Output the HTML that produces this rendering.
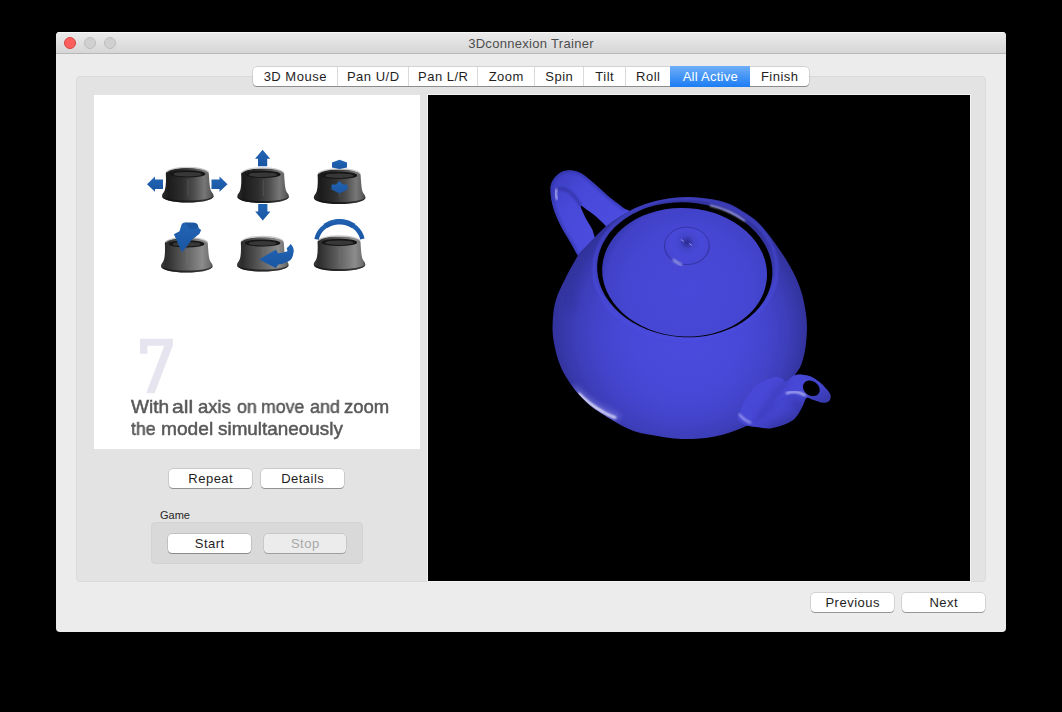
<!DOCTYPE html>
<html><head><meta charset="utf-8">
<style>
html,body{margin:0;padding:0;background:#000;width:1062px;height:712px;overflow:hidden;font-family:"Liberation Sans",sans-serif;}
.abs{position:absolute;}
#win{position:absolute;left:56px;top:32px;width:950px;height:600px;background:#ececec;border-radius:4px;overflow:hidden;}
#title{position:absolute;left:0;top:0;width:950px;height:21px;background:linear-gradient(#ebebeb,#d6d6d6);border-bottom:1px solid #b8b8b8;box-shadow:inset 0 1px 0 #f6f6f6;}
#title .t{position:absolute;left:0;width:950px;top:4px;text-align:center;font-size:13px;color:#4d4d4d;letter-spacing:0.3px;}
.light{position:absolute;width:12px;height:12px;box-sizing:border-box;border-radius:50%;top:5px;}
#group{position:absolute;left:20px;top:44px;width:908px;height:504px;background:#e3e3e3;border:1px solid #dadada;border-radius:4px;}
#white{position:absolute;left:38px;top:63px;width:326px;height:354px;background:#fff;}
#black{position:absolute;left:371px;top:62px;width:542px;height:486px;background:#000;border:1px solid #f2f2f2;}
.btn{position:absolute;height:19px;background:#fff;border-radius:4px;box-shadow:0 0 0 0.5px rgba(0,0,0,0.22),0 1px 0.5px rgba(0,0,0,0.28);font-size:13px;color:#1e1e1e;text-align:center;line-height:19px;letter-spacing:0.5px;text-indent:0.5px;}
#tabs{position:absolute;left:197px;top:35px;width:556px;height:19px;background:#fff;border-radius:4px;box-shadow:0 0 0 0.5px rgba(0,0,0,0.22),0 1px 0.5px rgba(0,0,0,0.3);}
.tab{position:absolute;top:0;height:19px;line-height:20px;font-size:13px;color:#1e1e1e;text-align:center;border-left:1px solid #dadada;box-sizing:border-box;letter-spacing:0.5px;text-indent:0.5px;}
.para span{position:absolute;will-change:transform;font-size:18.5px;line-height:22px;color:#585858;-webkit-text-stroke:0.5px #585858;white-space:nowrap;transform-origin:0 0;}
</style></head><body>
<div id="win">
  <div id="title">
    <div class="light" style="left:8px;background:#fc605c;border:0.5px solid #d9443f;"></div>
    <div class="light" style="left:28px;background:#d0d0d0;border:0.5px solid #bdbdbd;"></div>
    <div class="light" style="left:48px;background:#d0d0d0;border:0.5px solid #bdbdbd;"></div>
    <div class="t">3Dconnexion Trainer</div>
  </div>
  <div id="group"></div>
  <div id="tabs">
    <div class="tab" style="left:0;width:84px;border-left:0;border-radius:4px 0 0 4px">3D Mouse</div>
    <div class="tab" style="left:84px;width:71px">Pan U/D</div>
    <div class="tab" style="left:155px;width:69px">Pan L/R</div>
    <div class="tab" style="left:224px;width:57px">Zoom</div>
    <div class="tab" style="left:281px;width:49px">Spin</div>
    <div class="tab" style="left:330px;width:42px">Tilt</div>
    <div class="tab" style="left:372px;width:45px">Roll</div>
    <div class="tab" style="left:417px;top:-1px;height:21px;line-height:22px;width:80px;border-left:0;background:linear-gradient(#6eaef7,#1b7df4);color:#fff;letter-spacing:0.25px">All Active</div>
    <div class="tab" style="left:497px;width:59px;border-left:0">Finish</div>
  </div>
  <div id="white">
    <svg class="abs" style="left:-94px;top:-95px" width="420" height="450"><path d="M140,338.7 L172.9,338.7 L172.9,345.3 L154.6,393.2 L146.2,393.2 L164.3,345.7 L147.4,345.7 L147.4,353.8 L140,353.8 Z" fill="#e6e4ee"/></svg>
    <div class="para"><span style="left:36.7px;top:301px;transform:scaleX(1.028)">With</span><span style="left:78.1px;top:301px;transform:scaleX(1.141)">all</span><span style="left:103.7px;top:301px;transform:scaleX(0.994)">axis</span><span style="left:143.0px;top:301px;transform:scaleX(0.965)">on</span><span style="left:167.3px;top:301px;transform:scaleX(0.955)">move</span><span style="left:215.5px;top:301px;transform:scaleX(0.972)">and</span><span style="left:250.0px;top:301px;transform:scaleX(1.000)">zoom</span><span style="left:37.2px;top:323px;transform:scaleX(0.952)">the</span><span style="left:67.3px;top:323px;transform:scaleX(1.035)">model</span><span style="left:124.2px;top:323px;transform:scaleX(1.020)">simultaneously</span></div>
  </div>
  <div id="black"></div>
  <div class="btn" style="left:113px;top:437px;width:83px">Repeat</div>
  <div class="btn" style="left:205px;top:437px;width:83px">Details</div>
  <div class="abs" style="left:104px;top:477px;font-size:11px;color:#262626">Game</div>
  <div class="abs" style="left:95px;top:490px;width:212px;height:42px;background:#d9d9d9;border-radius:4px;border:1px solid #d3d3d3;box-sizing:border-box"></div>
  <div class="btn" style="left:112px;top:502px;width:83px">Start</div>
  <div class="btn" style="left:208px;top:502px;width:82px;background:#ececec;color:#a8a8a8;box-shadow:0 0 0 0.5px rgba(0,0,0,0.16),0 1px 0.5px rgba(0,0,0,0.2)">Stop</div>
  <div class="btn" style="left:755px;top:561px;width:83px">Previous</div>
  <div class="btn" style="left:846px;top:561px;width:83px">Next</div>
</div>
<!--CAPS--><svg class="abs" style="left:0;top:0" width="1062" height="712" viewBox="0 0 1062 712">
<defs>
<linearGradient id="gCapD" x1="0" y1="0" x2="1" y2="0">
<stop offset="0" stop-color="#2c2c2c"/><stop offset="0.12" stop-color="#1b1b1b"/><stop offset="0.4" stop-color="#2e2e2e"/><stop offset="0.62" stop-color="#4e4e4e"/><stop offset="0.82" stop-color="#777"/><stop offset="0.95" stop-color="#5a5a5a"/><stop offset="1" stop-color="#383838"/></linearGradient>
<linearGradient id="gCapL" x1="0" y1="0" x2="1" y2="0">
<stop offset="0" stop-color="#3a3a3a"/><stop offset="0.1" stop-color="#2c2c2c"/><stop offset="0.3" stop-color="#484848"/><stop offset="0.55" stop-color="#6a6a6a"/><stop offset="0.8" stop-color="#8c8c8c"/><stop offset="0.95" stop-color="#6e6e6e"/><stop offset="1" stop-color="#484848"/></linearGradient>
<linearGradient id="gArrow" x1="0" y1="0" x2="0" y2="1">
<stop offset="0" stop-color="#2264b4"/><stop offset="1" stop-color="#1a56a2"/></linearGradient>
</defs>
<g transform="translate(162 167.5)">
<path d="M3.8,6 C3.8,2.5 13,0.6 25.5,0.6 C38,0.6 46.8,2.5 46.8,6 C47.2,12 47.5,18 48.5,22 C49.5,25 51.6,26 51.6,28.5 C51.6,32.5 40,35 25.5,35 C11,35 0,32.5 0,28.5 C0,26 2.2,25 3,22 C4,18 4.2,12 3.8,6 Z" fill="url(#gCapD)"/>
<path d="M0,28.5 C0,32.5 11,35 25.5,35 C40,35 51.6,32.5 51.6,28.5 C50,31 40,33 25.5,33 C11,33 2,31 0,28.5 Z" fill="#111" opacity="0.7"/>
<path d="M4.5,4.5 C8,1.2 16,-0.2 25.5,-0.2 C35,-0.2 43,1.2 46.5,4.5" fill="none" stroke="#c4c4c4" stroke-width="1.3" opacity="0.85"/>
<ellipse cx="25.6" cy="6.4" rx="17.8" ry="3.6" fill="#161616"/>
<ellipse cx="25.6" cy="6.7" rx="14" ry="2.3" fill="#383838"/>
<line x1="26" y1="12" x2="26" y2="28" stroke="#8a8a8a" stroke-width="0.5" opacity="0.5"/>
</g>
<g transform="translate(237.3 168)">
<path d="M3.8,6 C3.8,2.5 13,0.6 25.5,0.6 C38,0.6 46.8,2.5 46.8,6 C47.2,12 47.5,18 48.5,22 C49.5,25 51.6,26 51.6,28.5 C51.6,32.5 40,35 25.5,35 C11,35 0,32.5 0,28.5 C0,26 2.2,25 3,22 C4,18 4.2,12 3.8,6 Z" fill="url(#gCapD)"/>
<path d="M0,28.5 C0,32.5 11,35 25.5,35 C40,35 51.6,32.5 51.6,28.5 C50,31 40,33 25.5,33 C11,33 2,31 0,28.5 Z" fill="#111" opacity="0.7"/>
<path d="M4.5,4.5 C8,1.2 16,-0.2 25.5,-0.2 C35,-0.2 43,1.2 46.5,4.5" fill="none" stroke="#c4c4c4" stroke-width="1.3" opacity="0.85"/>
<ellipse cx="25.6" cy="6.4" rx="17.8" ry="3.6" fill="#161616"/>
<ellipse cx="25.6" cy="6.7" rx="14" ry="2.3" fill="#383838"/>
<line x1="26" y1="12" x2="26" y2="28" stroke="#8a8a8a" stroke-width="0.5" opacity="0.5"/>
</g>
<g transform="translate(313.8 169)">
<path d="M3.8,6 C3.8,2.5 13,0.6 25.5,0.6 C38,0.6 46.8,2.5 46.8,6 C47.2,12 47.5,18 48.5,22 C49.5,25 51.6,26 51.6,28.5 C51.6,32.5 40,35 25.5,35 C11,35 0,32.5 0,28.5 C0,26 2.2,25 3,22 C4,18 4.2,12 3.8,6 Z" fill="url(#gCapD)"/>
<path d="M0,28.5 C0,32.5 11,35 25.5,35 C40,35 51.6,32.5 51.6,28.5 C50,31 40,33 25.5,33 C11,33 2,31 0,28.5 Z" fill="#111" opacity="0.7"/>
<path d="M4.5,4.5 C8,1.2 16,-0.2 25.5,-0.2 C35,-0.2 43,1.2 46.5,4.5" fill="none" stroke="#c4c4c4" stroke-width="1.3" opacity="0.85"/>
<ellipse cx="25.6" cy="6.4" rx="17.8" ry="3.6" fill="#161616"/>
<ellipse cx="25.6" cy="6.7" rx="14" ry="2.3" fill="#383838"/>
<line x1="26" y1="12" x2="26" y2="28" stroke="#8a8a8a" stroke-width="0.5" opacity="0.5"/>
</g>
<g transform="translate(161 237.5)">
<path d="M3.8,6 C3.8,2.5 13,0.6 25.5,0.6 C38,0.6 46.8,2.5 46.8,6 C47.2,12 47.5,18 48.5,22 C49.5,25 51.6,26 51.6,28.5 C51.6,32.5 40,35 25.5,35 C11,35 0,32.5 0,28.5 C0,26 2.2,25 3,22 C4,18 4.2,12 3.8,6 Z" fill="url(#gCapL)"/>
<path d="M0,28.5 C0,32.5 11,35 25.5,35 C40,35 51.6,32.5 51.6,28.5 C50,31 40,33 25.5,33 C11,33 2,31 0,28.5 Z" fill="#111" opacity="0.7"/>
<path d="M4.5,4.5 C8,1.2 16,-0.2 25.5,-0.2 C35,-0.2 43,1.2 46.5,4.5" fill="none" stroke="#c4c4c4" stroke-width="1.3" opacity="0.85"/>
<ellipse cx="25.6" cy="6.4" rx="17.8" ry="3.6" fill="#161616"/>
<ellipse cx="25.6" cy="6.7" rx="14" ry="2.3" fill="#383838"/>
<line x1="26" y1="12" x2="26" y2="28" stroke="#8a8a8a" stroke-width="0.5" opacity="0.5"/>
</g>
<g transform="translate(237 236.6)">
<path d="M3.8,6 C3.8,2.5 13,0.6 25.5,0.6 C38,0.6 46.8,2.5 46.8,6 C47.2,12 47.5,18 48.5,22 C49.5,25 51.6,26 51.6,28.5 C51.6,32.5 40,35 25.5,35 C11,35 0,32.5 0,28.5 C0,26 2.2,25 3,22 C4,18 4.2,12 3.8,6 Z" fill="url(#gCapL)"/>
<path d="M0,28.5 C0,32.5 11,35 25.5,35 C40,35 51.6,32.5 51.6,28.5 C50,31 40,33 25.5,33 C11,33 2,31 0,28.5 Z" fill="#111" opacity="0.7"/>
<path d="M4.5,4.5 C8,1.2 16,-0.2 25.5,-0.2 C35,-0.2 43,1.2 46.5,4.5" fill="none" stroke="#c4c4c4" stroke-width="1.3" opacity="0.85"/>
<ellipse cx="25.6" cy="6.4" rx="17.8" ry="3.6" fill="#161616"/>
<ellipse cx="25.6" cy="6.7" rx="14" ry="2.3" fill="#383838"/>
<line x1="26" y1="12" x2="26" y2="28" stroke="#8a8a8a" stroke-width="0.5" opacity="0.5"/>
</g>
<g transform="translate(313.7 236)">
<path d="M3.8,6 C3.8,2.5 13,0.6 25.5,0.6 C38,0.6 46.8,2.5 46.8,6 C47.2,12 47.5,18 48.5,22 C49.5,25 51.6,26 51.6,28.5 C51.6,32.5 40,35 25.5,35 C11,35 0,32.5 0,28.5 C0,26 2.2,25 3,22 C4,18 4.2,12 3.8,6 Z" fill="url(#gCapL)"/>
<path d="M0,28.5 C0,32.5 11,35 25.5,35 C40,35 51.6,32.5 51.6,28.5 C50,31 40,33 25.5,33 C11,33 2,31 0,28.5 Z" fill="#111" opacity="0.7"/>
<path d="M4.5,4.5 C8,1.2 16,-0.2 25.5,-0.2 C35,-0.2 43,1.2 46.5,4.5" fill="none" stroke="#c4c4c4" stroke-width="1.3" opacity="0.85"/>
<ellipse cx="25.6" cy="6.4" rx="17.8" ry="3.6" fill="#161616"/>
<ellipse cx="25.6" cy="6.7" rx="14" ry="2.3" fill="#383838"/>
<line x1="26" y1="12" x2="26" y2="28" stroke="#8a8a8a" stroke-width="0.5" opacity="0.5"/>
</g>
<path d="M147.0,184.2 L155.0,176.6 L155.0,179.5 L163.0,179.5 L163.0,188.9 L155.0,188.9 L155.0,191.8Z" fill="url(#gArrow)"/>
<path d="M227.5,184.2 L219.5,176.6 L219.5,179.5 L211.5,179.5 L211.5,188.9 L219.5,188.9 L219.5,191.8Z" fill="url(#gArrow)"/>
<path d="M262.6,149.8 L255.0,158.8 L258.0,158.8 L258.0,166.3 L267.2,166.3 L267.2,158.8 L270.2,158.8Z" fill="url(#gArrow)"/>
<path d="M262.8,220.5 L255.2,211.5 L258.2,211.5 L258.2,204.0 L267.4,204.0 L267.4,211.5 L270.4,211.5Z" fill="url(#gArrow)"/>
<path d="M332,162.5 L339.5,159.8 L347,162.5 L347,167.5 L339.5,169 L332,167.5 Z" fill="url(#gArrow)"/>
<path d="M331.5,184.5 L336,184.5 L339.5,181 L343,184.5 L347.5,184.5 L347.5,189.5 L339.5,193.5 L331.5,189.5 Z" fill="url(#gArrow)"/>
<path d="M182,252.6 L173.9,234.3 L179.5,231.2 L181.6,224.6 C182.2,223.2 183.5,222.6 185,222.5 L194.5,222.8 C196.5,223.2 197.6,224.3 197.9,225.6 L198.6,228.1 L201.1,230.1 L199.5,233.7 L191.6,239.9 Z" fill="url(#gArrow)"/>
<path d="M185,222.5 L194.5,222.8 C196.5,223.2 197.6,224.3 197.9,225.6 L198.6,228.1 L190,229 Z" fill="#174c8e" opacity="0.5"/>
<path d="M258.9,259.4 L275.9,249.7 L278.2,253.6 C281,253 284,252.5 287.5,251.3 L286.7,248.2 L289,245.9 L290.6,243.9 C293,246 294,249 293.7,251.5 C293.2,255 292.5,258 290.5,260 C287,262.5 283,264 278.2,264.4 L275.9,267.9 Z" fill="url(#gArrow)"/>
<path d="M314.39,238.92 L314.63,237.81 L314.93,236.72 L315.28,235.64 L315.69,234.58 L316.16,233.54 L316.68,232.51 L317.25,231.52 L317.87,230.55 L318.55,229.61 L319.27,228.69 L320.04,227.82 L320.85,226.97 L321.71,226.17 L322.60,225.40 L323.54,224.67 L324.51,223.99 L327.16,227.79 L326.36,228.34 L325.58,228.92 L324.85,229.53 L324.14,230.18 L323.47,230.85 L322.84,231.56 L322.25,232.28 L321.69,233.04 L321.18,233.81 L320.71,234.61 L320.28,235.43 L319.89,236.26 L319.56,237.11 L319.26,237.98 L319.02,238.85 L318.82,239.74Z" fill="url(#gArrow)"/>
<path d="M323.49,224.09 L325.24,222.93 L327.09,221.91 L329.03,221.03 L331.04,220.31 L333.10,219.74 L335.21,219.33 L337.35,219.08 L339.50,219.00 L341.65,219.08 L343.79,219.33 L345.90,219.74 L347.96,220.31 L349.97,221.03 L351.91,221.91 L353.76,222.93 L355.51,224.09 L352.18,228.34 L350.79,227.45 L349.33,226.65 L347.80,225.98 L346.21,225.41 L344.57,224.97 L342.90,224.66 L341.21,224.46 L339.50,224.40 L337.79,224.46 L336.10,224.66 L334.43,224.97 L332.79,225.41 L331.20,225.98 L329.67,226.65 L328.21,227.45 L326.82,228.34Z" fill="url(#gArrow)"/>
<path d="M354.49,223.99 L355.44,224.66 L356.36,225.37 L357.23,226.11 L358.07,226.90 L358.87,227.72 L359.63,228.57 L360.34,229.46 L361.01,230.37 L361.63,231.32 L362.20,232.29 L362.72,233.28 L363.18,234.29 L363.60,235.32 L363.97,236.37 L364.28,237.44 L364.53,238.52 L360.11,239.41 L359.90,238.55 L359.65,237.70 L359.35,236.86 L359.01,236.03 L358.62,235.22 L358.19,234.43 L357.72,233.65 L357.21,232.90 L356.66,232.17 L356.08,231.46 L355.45,230.77 L354.80,230.12 L354.10,229.49 L353.38,228.89 L352.63,228.33 L351.84,227.79Z" fill="url(#gArrow)"/>
</svg><!--/CAPS-->
<!--TEAPOT--><svg class="abs" style="left:0;top:0" width="1062" height="712" viewBox="0 0 1062 712">
<defs>
<radialGradient id="gBody" cx="680" cy="330" r="132" fx="690" fy="340" gradientUnits="userSpaceOnUse">
<stop offset="0" stop-color="#4a4bdc"/><stop offset="0.4" stop-color="#4849d8"/><stop offset="0.62" stop-color="#4445ce"/><stop offset="0.8" stop-color="#3d3eba"/><stop offset="0.92" stop-color="#3536a4"/><stop offset="1" stop-color="#2f3096"/></radialGradient>
<linearGradient id="gHandle" x1="550" y1="180" x2="620" y2="240" gradientUnits="userSpaceOnUse">
<stop offset="0" stop-color="#3d3ec2"/><stop offset="0.35" stop-color="#4849d8"/><stop offset="1" stop-color="#4d4ee2"/></linearGradient>
<radialGradient id="gLid" cx="690" cy="290" r="90" gradientUnits="userSpaceOnUse">
<stop offset="0" stop-color="#4849d8"/><stop offset="0.7" stop-color="#4546d2"/><stop offset="0.92" stop-color="#4142c8"/><stop offset="1" stop-color="#3a3bb8"/></radialGradient>
<linearGradient id="gSpout" x1="760" y1="380" x2="790" y2="430" gradientUnits="userSpaceOnUse">
<stop offset="0" stop-color="#4647d4"/><stop offset="0.6" stop-color="#4445cf"/><stop offset="1" stop-color="#34359f"/></linearGradient>
<radialGradient id="gKnob" cx="687" cy="242.5" r="24" gradientUnits="userSpaceOnUse">
<stop offset="0" stop-color="#2a2b90"/><stop offset="0.12" stop-color="#3536a8"/><stop offset="0.3" stop-color="#4445cc"/><stop offset="0.6" stop-color="#4849d8"/><stop offset="0.9" stop-color="#4647d3"/><stop offset="1" stop-color="#3a3bb5"/></radialGradient>
<filter id="blur1" x="-20%" y="-20%" width="140%" height="140%"><feGaussianBlur stdDeviation="1"/></filter>
<filter id="blur3" x="-20%" y="-20%" width="140%" height="140%"><feGaussianBlur stdDeviation="3"/></filter>
<clipPath id="cBody"><path d="M690.0,197.0 C699.9,197.3 713.5,199.0 722.5,201.5 C731.5,204.0 737.4,207.8 744.0,212.0 C750.6,216.2 755.1,218.7 762.0,226.5 C768.9,234.3 779.3,248.6 785.6,258.8 C791.9,269.0 796.4,277.6 799.9,287.5 C803.4,297.4 805.5,308.6 806.5,318.0 C807.5,327.4 806.8,335.9 806.0,343.6 C805.2,351.3 803.5,358.5 801.5,364.0 C799.5,369.5 797.6,370.6 794.0,376.6 C790.4,382.6 785.3,393.3 780.0,400.0 C774.7,406.7 768.2,412.4 762.0,417.0 C755.8,421.6 750.8,424.3 743.0,427.5 C735.2,430.7 725.2,434.5 715.0,436.4 C704.8,438.3 692.5,439.2 682.0,439.0 C671.5,438.8 660.5,436.6 651.7,435.0 C642.9,433.4 637.8,432.8 629.4,429.2 C621.0,425.6 608.9,418.0 601.6,413.4 C594.3,408.8 590.8,406.1 585.8,401.4 C580.8,396.7 575.6,391.1 571.3,385.0 C567.0,378.9 563.0,372.5 560.0,365.0 C557.0,357.5 554.7,347.5 553.5,340.0 C552.3,332.5 552.4,326.7 552.8,320.0 C553.2,313.3 553.9,306.7 555.9,300.0 C557.9,293.3 560.9,287.4 564.6,280.0 C568.3,272.6 574.3,261.5 577.9,255.8 C581.5,250.1 583.3,249.3 586.3,246.0 C589.3,242.7 592.8,239.4 596.1,236.1 C599.4,232.8 602.0,229.6 606.0,226.3 C610.0,223.0 614.3,219.9 620.0,216.5 C625.7,213.1 632.8,208.8 640.0,206.0 C647.2,203.2 654.7,201.0 663.0,199.5 C671.3,198.0 680.1,196.7 690.0,197.0 Z"/></clipPath>
<clipPath id="cSpout"><path d="M738.0,416.0 C739.0,412.3 742.3,404.4 745.5,399.2 C748.7,394.0 752.3,388.3 757.0,384.7 C761.7,381.1 769.4,378.4 773.5,377.4 C777.6,376.4 779.7,377.8 781.8,378.5 C783.9,379.2 783.9,382.1 786.0,381.6 C788.1,381.1 791.5,376.5 794.2,375.4 C797.0,374.3 799.7,374.6 802.5,374.8 C805.3,375.0 808.0,375.3 810.8,376.4 C813.5,377.5 816.4,379.5 819.0,381.6 C821.6,383.7 824.4,386.6 826.3,388.8 C828.2,391.0 830.0,393.0 830.5,395.0 C831.0,397.0 830.6,399.4 829.4,400.7 C828.2,402.0 826.0,403.0 823.2,402.8 C820.5,402.6 815.7,400.5 812.9,399.7 C810.1,398.9 808.3,396.9 806.6,398.0 C804.9,399.1 804.2,403.3 802.5,406.4 C800.8,409.5 798.7,414.0 796.3,416.8 C793.9,419.6 792.1,421.1 788.0,423.0 C783.9,424.9 776.7,427.5 771.4,428.2 C766.1,428.9 760.3,427.6 756.0,427.1 C751.7,426.6 748.2,425.9 745.5,425.0 C742.8,424.1 740.8,423.0 739.5,421.5 C738.2,420.0 737.0,419.7 738.0,416.0 Z"/></clipPath>
<clipPath id="cHandle"><path d="M625.0,209.0 C622.2,206.8 613.2,200.2 608.0,195.9 C602.8,191.6 598.4,187.1 594.0,183.3 C589.6,179.6 585.6,175.6 581.5,173.4 C577.4,171.2 573.4,170.3 569.6,170.3 C565.9,170.3 561.9,171.5 559.0,173.4 C556.1,175.3 553.4,178.8 552.0,181.8 C550.6,184.8 550.3,186.8 550.5,191.2 C550.7,195.6 551.5,202.2 553.3,208.0 C555.0,213.8 558.1,220.4 561.0,226.3 C563.9,232.2 568.1,238.3 570.9,243.2 C573.7,248.1 576.0,252.5 577.9,255.8 C579.8,259.1 581.3,261.8 582.0,263.0 L640,240 L640,215 Z"/></clipPath>
</defs>
<g>
<path d="M625.0,209.0 C622.2,206.8 613.2,200.2 608.0,195.9 C602.8,191.6 598.4,187.1 594.0,183.3 C589.6,179.6 585.6,175.6 581.5,173.4 C577.4,171.2 573.4,170.3 569.6,170.3 C565.9,170.3 561.9,171.5 559.0,173.4 C556.1,175.3 553.4,178.8 552.0,181.8 C550.6,184.8 550.3,186.8 550.5,191.2 C550.7,195.6 551.5,202.2 553.3,208.0 C555.0,213.8 558.1,220.4 561.0,226.3 C563.9,232.2 568.1,238.3 570.9,243.2 C573.7,248.1 576.0,252.5 577.9,255.8 C579.8,259.1 581.3,261.8 582.0,263.0 L640,240 L640,215 Z" fill="url(#gHandle)"/>
<g clip-path="url(#cHandle)">
<path d="M625.0,209.0 C622.2,206.8 613.2,200.2 608.0,195.9 C602.8,191.6 598.4,187.1 594.0,183.3 C589.6,179.6 585.6,175.6 581.5,173.4 C577.4,171.2 573.4,170.3 569.6,170.3 C565.9,170.3 561.9,171.5 559.0,173.4 C556.1,175.3 553.4,178.8 552.0,181.8 C550.6,184.8 550.3,186.8 550.5,191.2 C550.7,195.6 551.5,202.2 553.3,208.0 C555.0,213.8 558.1,220.4 561.0,226.3 C563.9,232.2 568.1,238.3 570.9,243.2 C573.7,248.1 576.0,252.5 577.9,255.8 C579.8,259.1 581.3,261.8 582.0,263.0" fill="none" stroke="#2c2d96" stroke-width="5" opacity="0.45" filter="url(#blur1)"/>
<path d="M556,190 C562,186 572,190 581,206" fill="none" stroke="#2a2b90" stroke-width="3" opacity="0.6" filter="url(#blur1)"/>
</g>
<path d="M580.7,206.0 C581.0,204.5 585.5,208.8 588.0,210.5 C590.5,212.2 593.0,213.9 596.0,216.5 C599.0,219.1 603.3,223.1 606.0,226.3 C608.7,229.6 613.3,233.4 612.0,236.0 C610.7,238.6 601.3,243.2 598.0,242.0 C594.7,240.8 594.0,232.8 592.0,229.0 C590.0,225.2 588.2,223.1 586.3,219.3 C584.4,215.5 580.4,207.5 580.7,206.0 Z" fill="#000"/>
<path d="M556.5,189.5 C555,192 555.5,196 557,199" fill="none" stroke="#e8e8ff" stroke-width="1.6" stroke-linecap="round" filter="url(#blur1)"/>
</g>
<path d="M690.0,197.0 C699.9,197.3 713.5,199.0 722.5,201.5 C731.5,204.0 737.4,207.8 744.0,212.0 C750.6,216.2 755.1,218.7 762.0,226.5 C768.9,234.3 779.3,248.6 785.6,258.8 C791.9,269.0 796.4,277.6 799.9,287.5 C803.4,297.4 805.5,308.6 806.5,318.0 C807.5,327.4 806.8,335.9 806.0,343.6 C805.2,351.3 803.5,358.5 801.5,364.0 C799.5,369.5 797.6,370.6 794.0,376.6 C790.4,382.6 785.3,393.3 780.0,400.0 C774.7,406.7 768.2,412.4 762.0,417.0 C755.8,421.6 750.8,424.3 743.0,427.5 C735.2,430.7 725.2,434.5 715.0,436.4 C704.8,438.3 692.5,439.2 682.0,439.0 C671.5,438.8 660.5,436.6 651.7,435.0 C642.9,433.4 637.8,432.8 629.4,429.2 C621.0,425.6 608.9,418.0 601.6,413.4 C594.3,408.8 590.8,406.1 585.8,401.4 C580.8,396.7 575.6,391.1 571.3,385.0 C567.0,378.9 563.0,372.5 560.0,365.0 C557.0,357.5 554.7,347.5 553.5,340.0 C552.3,332.5 552.4,326.7 552.8,320.0 C553.2,313.3 553.9,306.7 555.9,300.0 C557.9,293.3 560.9,287.4 564.6,280.0 C568.3,272.6 574.3,261.5 577.9,255.8 C581.5,250.1 583.3,249.3 586.3,246.0 C589.3,242.7 592.8,239.4 596.1,236.1 C599.4,232.8 602.0,229.6 606.0,226.3 C610.0,223.0 614.3,219.9 620.0,216.5 C625.7,213.1 632.8,208.8 640.0,206.0 C647.2,203.2 654.7,201.0 663.0,199.5 C671.3,198.0 680.1,196.7 690.0,197.0 Z" fill="url(#gBody)"/>
<g clip-path="url(#cBody)">
<path d="M572,310 C568,280 580,252 604,228" fill="none" stroke="#2f3098" stroke-width="12" opacity="0.3" filter="url(#blur3)"/>
<ellipse cx="685.5" cy="269" rx="91.5" ry="70.5" fill="none" stroke="#4d4ee2" stroke-width="3" opacity="0.6" filter="url(#blur1)"/>
</g>
<ellipse cx="684.8" cy="269.8" rx="87.7" ry="67.4" transform="rotate(4 684.8 269.8)" fill="#000"/>
<ellipse cx="684.6" cy="272.3" rx="82.5" ry="64.2" transform="rotate(4 684.6 272.3)" fill="url(#gLid)"/>
<path d="M710,205.5 C722,208 734,213 745,221" fill="none" stroke="#dcdcff" stroke-width="1.3" opacity="0.85" filter="url(#blur1)"/>
<ellipse cx="686.9" cy="245.9" rx="22.8" ry="19.1" fill="url(#gKnob)"/>
<ellipse cx="686.9" cy="245.9" rx="22.4" ry="18.7" fill="none" stroke="#2e2f98" stroke-width="1" opacity="0.8"/>
<path d="M681,239.5 L684,241.5 M689,243.5 L692,245.5" stroke="#c8c8ff" stroke-width="0.7" opacity="0.8"/>
<path d="M673,259.5 C676,262.5 679,264 682,264.8" fill="none" stroke="#e8e8ff" stroke-width="1.2" filter="url(#blur1)"/>
<g clip-path="url(#cBody)">
<path d="M573,388 C582,397 592,405 603,411 C608,414 613,416 619,418" fill="none" stroke="#9090f4" stroke-width="7" opacity="0.55" filter="url(#blur3)"/>
<path d="M579,394 C586,401 594,407 603,412 C607,414.5 611,416 615,417.5" fill="none" stroke="#f4f4ff" stroke-width="2.6" stroke-linecap="round" opacity="0.9" filter="url(#blur1)"/>
</g>
<path d="M738.0,416.0 C739.0,412.3 742.3,404.4 745.5,399.2 C748.7,394.0 752.3,388.3 757.0,384.7 C761.7,381.1 769.4,378.4 773.5,377.4 C777.6,376.4 779.7,377.8 781.8,378.5 C783.9,379.2 783.9,382.1 786.0,381.6 C788.1,381.1 791.5,376.5 794.2,375.4 C797.0,374.3 799.7,374.6 802.5,374.8 C805.3,375.0 808.0,375.3 810.8,376.4 C813.5,377.5 816.4,379.5 819.0,381.6 C821.6,383.7 824.4,386.6 826.3,388.8 C828.2,391.0 830.0,393.0 830.5,395.0 C831.0,397.0 830.6,399.4 829.4,400.7 C828.2,402.0 826.0,403.0 823.2,402.8 C820.5,402.6 815.7,400.5 812.9,399.7 C810.1,398.9 808.3,396.9 806.6,398.0 C804.9,399.1 804.2,403.3 802.5,406.4 C800.8,409.5 798.7,414.0 796.3,416.8 C793.9,419.6 792.1,421.1 788.0,423.0 C783.9,424.9 776.7,427.5 771.4,428.2 C766.1,428.9 760.3,427.6 756.0,427.1 C751.7,426.6 748.2,425.9 745.5,425.0 C742.8,424.1 740.8,423.0 739.5,421.5 C738.2,420.0 737.0,419.7 738.0,416.0 Z" fill="url(#gSpout)"/>
<g clip-path="url(#cSpout)">
<path d="M745.5,399.2 C748.0,393.3 752.3,388.3 757.0,384.7 C761.7,381.1 769.4,378.4 773.5,377.4 C777.6,376.4 779.7,377.8 781.8,378.5 C783.9,379.2 783.9,382.1 786.0,381.6 C788.1,381.1 791.5,376.5 794.2,375.4 C797.0,374.3 800.5,374.0 802.5,374.8 C804.5,375.6 805.8,377.1 806.0,380.0 C806.2,382.9 805.8,389.8 804.0,392.0 C802.2,394.2 798.2,392.3 795.0,393.0 C791.8,393.7 788.8,394.0 785.0,396.0 C781.2,398.0 777.0,401.3 772.0,405.0 C767.0,408.7 760.0,415.5 755.0,418.0 C750.0,420.5 743.6,423.1 742.0,420.0 C740.4,416.9 743.0,405.1 745.5,399.2 Z" fill="#4849d8" opacity="0.9" filter="url(#blur1)"/>
<path d="M758,418 C768,405 776,392 787,381" fill="none" stroke="#2e2f96" stroke-width="5" opacity="0.45" filter="url(#blur3)"/>
<path d="M790,400 C800,404 804,410 800,418 C792,426 780,430 770,430" fill="none" stroke="#2e2f96" stroke-width="8" opacity="0.35" filter="url(#blur3)"/>
</g>
<path d="M786,393.5 C793,391 800,392 806,396" fill="none" stroke="#e4e4ff" stroke-width="1.5" filter="url(#blur1)"/>
<path d="M739,414 C742,418 746,421 751,423" fill="none" stroke="#d8d8ff" stroke-width="1.5" opacity="0.8" filter="url(#blur1)"/>
<ellipse cx="811.3" cy="388.3" rx="9" ry="7.2" transform="rotate(35 811.3 388.3)" fill="#000"/>
</svg><!--/TEAPOT-->
</body></html>
